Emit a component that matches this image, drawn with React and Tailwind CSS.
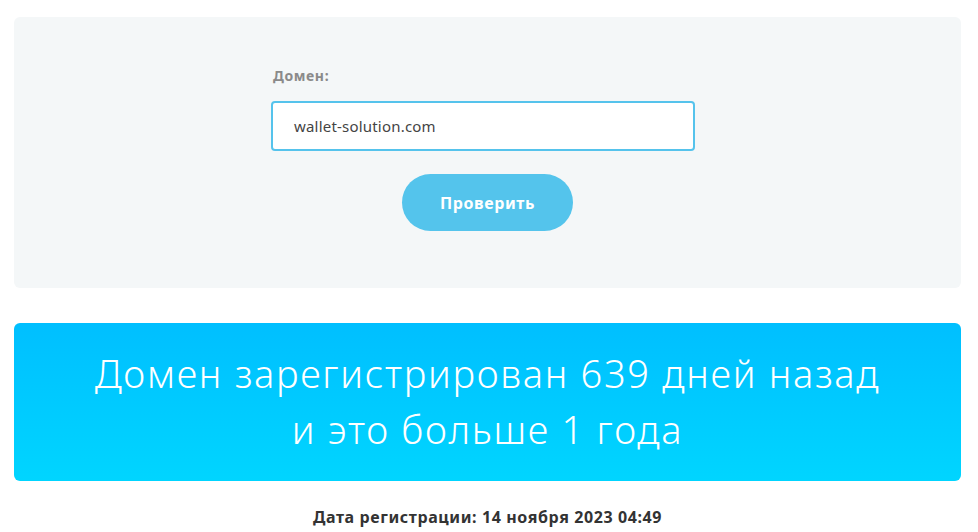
export default function App() {
  return (
    <div className="min-h-screen bg-white pt-[17px] pl-[14px] pr-[17px]" style={{ fontFamily: '"Noto Sans", "Open Sans", sans-serif' }}>
      {/* форма проверки */}
      <div className="bg-[#f4f7f8] rounded-md h-[271px] flex flex-col items-center pt-[50px]">
        <div className="w-[424px] mr-[9px]">
          <div className="text-[14px] font-bold text-[#8a8a8a] pl-[2px] leading-[18px] tracking-[0.6px]">Домен:</div>
          <div className="mt-[16px] h-[50px] border-2 border-[#55c3ec] rounded-[4px] bg-white flex items-center px-[21px]">
            <span className="text-[15px] text-[#444] tracking-[0.2px]">wallet-solution.com</span>
          </div>
        </div>
        <button className="mt-[23px] w-[171px] h-[57px] rounded-full bg-[#54c4ec] text-white font-bold text-[16px] tracking-[0.6px]">
          Проверить
        </button>
      </div>

      {/* результат */}
      <div className="mt-[35px] h-[158px] rounded-md bg-gradient-to-b from-[#00bfff] to-[#00d5ff] flex flex-col items-center justify-center text-white">
        <div className="text-[38px] font-light leading-[56px] text-center tracking-[1.7px] -mt-[3px]">
          Домен зарегистрирован 639 дней назад
          <br />
          и это больше 1 года
        </div>
      </div>

      <div className="mt-[24px] text-center text-[16px] font-bold text-[#333] tracking-[0.6px]">
        Дата регистрации: 14 ноября 2023 04:49
      </div>
    </div>
  );
}
